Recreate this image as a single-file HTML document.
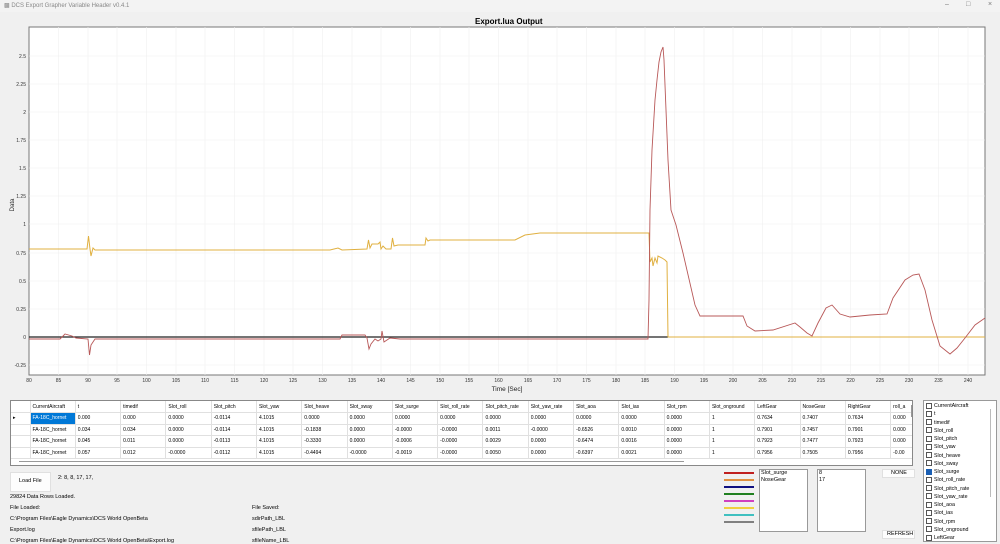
<!DOCTYPE html>
<html><head><meta charset="utf-8"><style>
*{margin:0;padding:0;box-sizing:border-box}
body{width:1000px;height:544px;background:#f0f0f0;font-family:"Liberation Sans",sans-serif;position:relative;overflow:hidden;color:#000}
.abs{position:absolute}
.t{font-size:5.5px;white-space:nowrap}
table{border-collapse:collapse;font-size:5px}
td{border-right:1px solid #e0e0e0;border-bottom:1px solid #e0e0e0;height:11.5px;padding-left:2px;white-space:nowrap;overflow:hidden}
.cb{width:6px;height:6px;border:1px solid #555;background:#fff;display:inline-block;vertical-align:middle;margin-right:2px}
</style></head><body>
<div class="abs" style="left:0;top:0;width:1000px;height:12px;background:#f3f3f3"></div>
<div class="abs t" style="left:4px;top:2px;font-size:6px;color:#888">&#9641; DCS Export Grapher Variable Header v0.4.1</div>
<div class="abs t" style="left:945px;top:1px;font-size:7px;color:#777">–</div>
<div class="abs t" style="left:966px;top:1px;font-size:7px;color:#777">□</div>
<div class="abs t" style="left:988px;top:1px;font-size:7px;color:#777">×</div>
<div class="abs" style="left:475px;top:17px;font-size:8px;font-weight:bold">Export.lua Output</div>
<svg class="abs" style="left:0;top:0" width="1000" height="400">
<rect x="29" y="27" width="956" height="348" fill="#fff" stroke="#777" stroke-width="1"/>
<g stroke="#f0f0f0" stroke-width="0.6">
<path d="M58.5 27V375M88 27V375M117 27V375M146.5 27V375M176 27V375M205 27V375M234.5 27V375M264 27V375M293 27V375M322.5 27V375M352 27V375M381 27V375M410.5 27V375M440 27V375M469 27V375M498.5 27V375M528 27V375M557 27V375M586.5 27V375M616 27V375M645 27V375M674.5 27V375M704 27V375M733 27V375M762.5 27V375M792 27V375M821 27V375M850.5 27V375M880 27V375M909 27V375M938.5 27V375M968 27V375"/>
<path d="M29 365H985M29 309H985M29 281H985M29 253H985M29 224H985M29 196H985M29 168H985M29 140H985M29 112H985M29 84H985M29 56H985"/>
</g>
<g font-size="5" fill="#333" text-anchor="end" font-family="Liberation Sans">
<text x="26" y="58">2.5</text><text x="26" y="86">2.25</text><text x="26" y="114">2</text><text x="26" y="142">1.75</text><text x="26" y="170">1.5</text><text x="26" y="198">1.25</text><text x="26" y="226">1</text><text x="26" y="255">0.75</text><text x="26" y="283">0.5</text><text x="26" y="311">0.25</text><text x="26" y="339">0</text><text x="26" y="367">-0.25</text>
</g>
<g font-size="5" fill="#333" text-anchor="middle" font-family="Liberation Sans">
<text x="29" y="382">80</text><text x="58.5" y="382">85</text><text x="88" y="382">90</text><text x="117" y="382">95</text><text x="146.5" y="382">100</text><text x="176" y="382">105</text><text x="205" y="382">110</text><text x="234.5" y="382">115</text><text x="264" y="382">120</text><text x="293" y="382">125</text><text x="322.5" y="382">130</text><text x="352" y="382">135</text><text x="381" y="382">140</text><text x="410.5" y="382">145</text><text x="440" y="382">150</text><text x="469" y="382">155</text><text x="498.5" y="382">160</text><text x="528" y="382">165</text><text x="557" y="382">170</text><text x="586.5" y="382">175</text><text x="616" y="382">180</text><text x="645" y="382">185</text><text x="674.5" y="382">190</text><text x="704" y="382">195</text><text x="733" y="382">200</text><text x="762.5" y="382">205</text><text x="792" y="382">210</text><text x="821" y="382">215</text><text x="850.5" y="382">220</text><text x="880" y="382">225</text><text x="909" y="382">230</text><text x="938.5" y="382">235</text><text x="968" y="382">240</text>
</g>
<text x="507" y="391" font-size="6.5" text-anchor="middle" fill="#222" font-family="Liberation Sans">Time [Sec]</text>
<text x="14" y="205" font-size="6" fill="#222" transform="rotate(-90 14 205)" text-anchor="middle" font-family="Liberation Sans">Data</text>
<path d="M29 337H668" stroke="#222" stroke-width="1.2" fill="none"/>
<path d="M29 249L87 249L88.5 236L90 249L91 256L93 248L95 250L200 250L330 250L338 248L342 250L367 249L368.5 240L370 248L372 244L378 244L380 242L381 249L383 246L386 249L391 249L392.5 238L394 246L398 245L425 245L426 238L428 241L430 240L515 240L525 235L540 233L649 233L650 262L652 258L653 266L655 258L657 263L658 256L662 258L665 260L667 262L668 337L985 337" stroke="#e0b040" stroke-width="1" fill="none"/>
<path d="M29 339L60 339L65 334L72 336L76 338L88 339L89.5 355L91 345L95 339L200 339L340 339L342 335L365 335L367 338L369 349L371 344L375 339L378 341L381 339L382 331L384 342L390 338L400 339L648 339L649 300L650 210L652 150L655 100L657 80L659 62L661 52L663 47L664 60L666 110L668 160L671 210L676 225L683 253L695 305L700 316L743 316L747 326L755 331L773 330L795 323L800 327L807 333L812 336L818 323L826 308L832 305L840 314L850 317L870 315L887 314L893 298L905 280L913 275L919 274L925 290L932 320L940 346L950 354L957 348L965 338L975 325L985 318" stroke="#b85858" stroke-width="0.9" fill="none"/>
</svg>
<div class="abs" style="left:10px;top:400px;width:903px;height:66px;background:#fff;border:1px solid #888;overflow:hidden">
<table style="width:900px;table-layout:fixed">
<colgroup><col style="width:19px"><col span="20" style="width:45.3px"></colgroup>
<tr><td></td><td>CurrentAircraft</td><td>t</td><td>timedif</td><td>Slot_roll</td><td>Slot_pitch</td><td>Slot_yaw</td><td>Slot_heave</td><td>Slot_sway</td><td>Slot_surge</td><td>Slot_roll_rate</td><td>Slot_pitch_rate</td><td>Slot_yaw_rate</td><td>Slot_aoa</td><td>Slot_ias</td><td>Slot_rpm</td><td>Slot_onground</td><td>LeftGear</td><td>NoseGear</td><td>RightGear</td><td>roll_a</td></tr>
<tr><td>▸</td><td style="background:#0078d7;color:#fff">FA-18C_hornet</td><td>0.000</td><td>0.000</td><td>0.0000</td><td>-0.0114</td><td>4.1015</td><td>0.0000</td><td>0.0000</td><td>0.0000</td><td>0.0000</td><td>0.0000</td><td>0.0000</td><td>0.0000</td><td>0.0000</td><td>0.0000</td><td>1</td><td>0.7634</td><td>0.7407</td><td>0.7634</td><td>0.000</td></tr>
<tr><td></td><td>FA-18C_hornet</td><td>0.034</td><td>0.034</td><td>0.0000</td><td>-0.0114</td><td>4.1015</td><td>-0.1838</td><td>0.0000</td><td>-0.0000</td><td>-0.0000</td><td>0.0011</td><td>-0.0000</td><td>-0.6526</td><td>0.0010</td><td>0.0000</td><td>1</td><td>0.7901</td><td>0.7457</td><td>0.7901</td><td>0.000</td></tr>
<tr><td></td><td>FA-18C_hornet</td><td>0.045</td><td>0.011</td><td>0.0000</td><td>-0.0113</td><td>4.1015</td><td>-0.3330</td><td>0.0000</td><td>-0.0006</td><td>-0.0000</td><td>0.0029</td><td>0.0000</td><td>-0.6474</td><td>0.0016</td><td>0.0000</td><td>1</td><td>0.7923</td><td>0.7477</td><td>0.7923</td><td>0.000</td></tr>
<tr><td></td><td>FA-18C_hornet</td><td>0.057</td><td>0.012</td><td>-0.0000</td><td>-0.0112</td><td>4.1015</td><td>-0.4494</td><td>-0.0000</td><td>-0.0019</td><td>-0.0000</td><td>0.0050</td><td>0.0000</td><td>-0.6397</td><td>0.0021</td><td>0.0000</td><td>1</td><td>0.7956</td><td>0.7505</td><td>0.7956</td><td>-0.00</td></tr>
</table>
<div class="abs" style="left:8px;top:60px;width:665px;height:1px;background:#999"></div>
<div class="abs" style="left:900px;top:4px;width:1px;height:12px;background:#999"></div>
</div>
<div class="abs" style="left:10px;top:472px;width:41px;height:20px;background:#fdfdfd;border:1px solid #e0e0e0"></div>
<div class="abs t" style="left:19px;top:478px">Load File</div>
<div class="abs t" style="left:58px;top:475px">2: 8, 8, 17, 17,</div>
<div class="abs t" style="left:10px;top:494px">29824 Data Rows Loaded.</div>
<div class="abs t" style="left:10px;top:505px">File Loaded:</div>
<div class="abs t" style="left:10px;top:516px">C:\Program Files\Eagle Dynamics\DCS World OpenBeta</div>
<div class="abs t" style="left:10px;top:527px">Export.log</div>
<div class="abs t" style="left:10px;top:538px">C:\Program Files\Eagle Dynamics\DCS World OpenBeta\Export.log</div>
<div class="abs t" style="left:252px;top:505px">File Saved:</div>
<div class="abs t" style="left:252px;top:516px">sdirPath_LBL</div>
<div class="abs t" style="left:252px;top:527px">sfilePath_LBL</div>
<div class="abs t" style="left:252px;top:538px">sfileName_LBL</div>
<div class="abs" style="left:724px;top:472px;width:30px;height:2px;background:#c02020"></div>
<div class="abs" style="left:724px;top:479px;width:30px;height:2px;background:#e09040"></div>
<div class="abs" style="left:724px;top:486px;width:30px;height:2px;background:#101080"></div>
<div class="abs" style="left:724px;top:493px;width:30px;height:2px;background:#208020"></div>
<div class="abs" style="left:724px;top:500px;width:30px;height:2px;background:#d040c0"></div>
<div class="abs" style="left:724px;top:507px;width:30px;height:2px;background:#f0d040"></div>
<div class="abs" style="left:724px;top:514px;width:30px;height:2px;background:#40c0c0"></div>
<div class="abs" style="left:724px;top:521px;width:30px;height:2px;background:#808080"></div>
<div class="abs" style="left:759px;top:469px;width:49px;height:63px;background:#fff;border:1px solid #999"></div>
<div class="abs t" style="left:761px;top:470px;line-height:7px">Slot_surge<br>NoseGear</div>
<div class="abs" style="left:817px;top:469px;width:49px;height:63px;background:#fff;border:1px solid #999"></div>
<div class="abs t" style="left:819px;top:470px;line-height:7px">8<br>17</div>
<div class="abs" style="left:882px;top:469px;width:33px;height:9px;background:#fdfdfd;border:1px solid #e0e0e0"></div>
<div class="abs t" style="left:891px;top:470px">NONE</div>
<div class="abs" style="left:882px;top:530px;width:33px;height:9px;background:#fdfdfd;border:1px solid #e0e0e0"></div>
<div class="abs t" style="left:887px;top:531px">REFRESH</div>
<div class="abs" style="left:923px;top:400px;width:74px;height:142px;background:#fff;border:1px solid #999;overflow:hidden">
<div class="abs" style="left:66px;top:8px;width:1px;height:88px;background:#bbb"></div>
<div class="abs t" style="left:2px;top:1px;line-height:8.25px;font-size:5.3px">
<span class="cb"></span>CurrentAircraft<br><span class="cb"></span>t<br><span class="cb"></span>timedif<br><span class="cb"></span>Slot_roll<br><span class="cb"></span>Slot_pitch<br><span class="cb"></span>Slot_yaw<br><span class="cb"></span>Slot_heave<br><span class="cb"></span>Slot_sway<br><span class="cb" style="background:#1a5fb4;border-color:#1a5fb4"></span>Slot_surge<br><span class="cb"></span>Slot_roll_rate<br><span class="cb"></span>Slot_pitch_rate<br><span class="cb"></span>Slot_yaw_rate<br><span class="cb"></span>Slot_aoa<br><span class="cb"></span>Slot_ias<br><span class="cb"></span>Slot_rpm<br><span class="cb"></span>Slot_onground<br><span class="cb"></span>LeftGear
</div></div>
</body></html>
